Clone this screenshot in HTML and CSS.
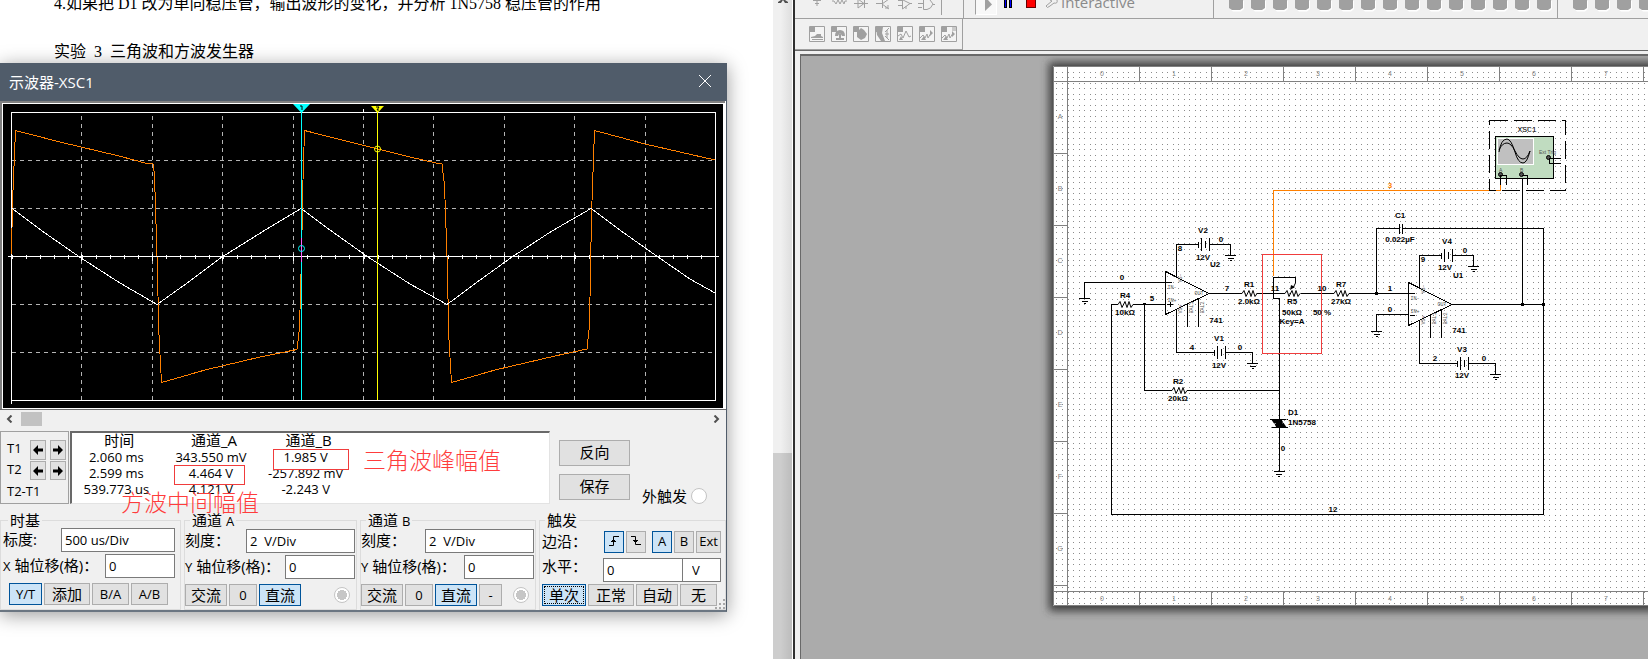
FILE: index.html
```html
<!DOCTYPE html>
<html lang="zh-CN">
<head>
<meta charset="utf-8">
<title>示波器-XSC1</title>
<link rel="stylesheet" href="styles.css">
</head>
<body>
<div class="desktop">
  <main class="document">
    <p class="doc-line">4.如果把 D1 改为单向稳压管，输出波形的变化，并分析 1N5758 稳压管的作用</p>
    <p class="doc-line">实验&nbsp; 3&nbsp; 三角波和方波发生器</p>

    <section class="scope" aria-label="示波器-XSC1">
      <header class="scope-title">
        <h1>示波器-XSC1</h1>
        <button class="close" aria-label="关闭"><svg width="14" height="14" viewBox="0 0 14 14"><path d="M1 1L13 13M13 1L1 13" stroke="#fff" fill="none"/></svg></button>
      </header>

      <svg class="display" viewBox="0 101 726 309">
        <rect x="0" y="101" width="726" height="309" fill="#fff"/>
        <path d="M1 409V102H725" stroke="#808080" stroke-width="2" fill="none"/>
        <path d="M0 409.500H726" stroke="#696969"/>
        <rect x="3" y="104" width="720" height="304" fill="#000"/>
        <g shape-rendering="crispEdges" fill="none">
          <g stroke="#b4b4b4" stroke-dasharray="4 4">
            <path d="M81.500 116V400M152.500 116V400M222.500 116V400M293.500 116V400M363.500 116V400M433.500 116V400M504.500 116V400M574.500 116V400M645.500 116V400"/>
            <path d="M12 160.500H715M12 208.500H715M12 304.500H715M12 352.500H715"/>
          </g>
          <path d="M11.500 112.500H715.500V400.500H11.500ZM11.500 400V404M363.500 109V112M8 256.500H719" stroke="#fff"/>
          <path d="M11.500 256.500H715" stroke="#fff" stroke-width="4" stroke-dasharray="1 13.080"/>
          <path d="M81.500 254V261M152.500 254V261M222.500 254V261M293.500 254V261M363.500 254V261M433.500 254V261M504.500 254V261M574.500 254V261M645.500 254V261" stroke="#fff"/>
          <path d="M11.500 254L12.500 202L15.500 130.500L60 142L119 156L145 163L153 164L154.500 175L157 256L159 335L161.500 382.500L205 370L260 357L297 349.500L299.500 328L301.500 256L303 180L304.500 130.500L350 142L410 157L436 163L442 164L444.500 185L447 256L449 340L451.500 382.500L495 370L555 356L587 349L589.500 325L591.500 215L594.500 130.500L645 144L680 152L715 160" stroke="#ff8000"/>
          <path d="M12 208.500L45 233L81 258L120 283L157 304.500L190 281L222 257L262 232L301 208.500L330 230L368 257L410 284L447 304.500L480 280L512 257L552 231L591 208.500L624 233L658 257L690 279L715 293" stroke="#fff"/>
          <path d="M301.500 108V400" stroke="#00ffff"/><path d="M301.500 238V262" stroke="#ff60ff"/>
          <path d="M377.500 108V400" stroke="#ffff00"/>
        </g>
        <path d="M293 104H310L301.500 113Z" fill="#00ffff"/><path d="M371 106H384L377.500 113Z" fill="#ffff00"/>
        <path d="M300 106H302V110M376 107H379L377 110H379" stroke="#000" fill="none"/>
        <circle cx="301.500" cy="248.500" r="3" stroke="#00ffff" fill="none"/>
        <circle cx="377.500" cy="149" r="3" stroke="#ffff00" fill="none"/>
      </svg>

      <div class="hscroll">
        <button aria-label="向左"><svg width="7" height="8" viewBox="0 0 7 8"><path d="M5.500 .5L2 4L5.500 7.500" stroke="#505050" stroke-width="2" fill="none"/></svg></button>
        <span class="thumb"></span>
        <button class="end" aria-label="向右"><svg width="7" height="8" viewBox="0 0 7 8"><path d="M1.500 .5L5 4L1.500 7.500" stroke="#505050" stroke-width="2" fill="none"/></svg></button>
      </div>

      <div class="readout">
        <div class="cursors">
          <span>T1</span><button aria-label="T1 左"><svg width="10" height="10" viewBox="0 0 10 10"><path d="M0 5L5 0V3.500H10V6.500H5V10Z"/></svg></button><button aria-label="T1 右"><svg width="10" height="10" viewBox="0 0 10 10"><path d="M10 5L5 0V3.500H0V6.500H5V10Z"/></svg></button>
          <span>T2</span><button aria-label="T2 左"><svg width="10" height="10" viewBox="0 0 10 10"><path d="M0 5L5 0V3.500H10V6.500H5V10Z"/></svg></button><button aria-label="T2 右"><svg width="10" height="10" viewBox="0 0 10 10"><path d="M10 5L5 0V3.500H0V6.500H5V10Z"/></svg></button>
          <span class="wide">T2-T1</span>
        </div>
        <div class="values">
          <table>
            <thead><tr><th>时间</th><th>通道_A</th><th>通道_B</th></tr></thead>
            <tbody>
              <tr><td>2.060 ms</td><td>343.550 mV</td><td>1.985 V</td></tr>
              <tr><td>2.599 ms</td><td>4.464 V</td><td>-257.892 mV</td></tr>
              <tr><td>539.773 us</td><td>4.121 V</td><td>-2.243 V</td></tr>
            </tbody>
          </table>
          <span class="mark mark-square"></span>
          <span class="mark mark-triangle"></span>
          <span class="note note-triangle">三角波峰幅值</span>
          <span class="note note-square">方波中间幅值</span>
        </div>
        <div class="actions"><button class="btn">反向</button><button class="btn">保存</button></div>
        <label class="ext">外触发<input type="radio" name="ext"></label>
      </div>

      <div class="groups">
        <fieldset class="group base">
          <legend>时基</legend>
          <div class="row"><label for="tb">标度:</label><input id="tb" class="long" value="500 us/Div"></div>
          <div class="row"><label for="xp"><small>X</small> 轴位移(格)：</label><input id="xp" value="0"></div>
          <div class="row keys"><button class="btn on w33">Y/T</button><button class="btn w46">添加</button><button class="btn w37">B/A</button><button class="btn w37">A/B</button></div>
        </fieldset>
        <fieldset class="group">
          <legend>通道 <small>A</small></legend>
          <div class="row"><label for="as">刻度：</label><input id="as" class="long" value="2  V/Div"></div>
          <div class="row"><label for="ap"><small>Y</small> 轴位移(格)：</label><input id="ap" value="0"></div>
          <div class="row keys"><button class="btn w42">交流</button><button class="btn w28">0</button><button class="btn on w42">直流</button><input type="radio" name="cha" aria-label="通道 A" class="dot" checked></div>
        </fieldset>
        <fieldset class="group">
          <legend>通道 <small>B</small></legend>
          <div class="row"><label for="bs">刻度：</label><input id="bs" class="long" value="2  V/Div"></div>
          <div class="row"><label for="bp"><small>Y</small> 轴位移(格)：</label><input id="bp" value="0"></div>
          <div class="row keys"><button class="btn w42">交流</button><button class="btn w28">0</button><button class="btn on w42">直流</button><button class="btn w23">-</button><input type="radio" name="chb" aria-label="通道 B" class="dot" checked></div>
        </fieldset>
        <fieldset class="group trigger">
          <legend>触发</legend>
          <div class="row edge"><span class="name">边沿：</span>
            <button class="btn on w20" aria-label="上升沿"><svg width="10" height="10" viewBox="0 0 10 10"><path d="M0 9.500H4.500V.5H10M2 5.500H7M3 4.500H6" stroke="#000" fill="none"/></svg></button>
            <button class="btn w20" aria-label="下降沿"><svg width="10" height="10" viewBox="0 0 10 10"><path d="M0 .5H4.500V8.500H10M2 4.500H7M3 5.500H6" stroke="#000" fill="none"/></svg></button>
            <button class="btn on w20 gap">A</button><button class="btn w20">B</button><button class="btn w25">Ext</button></div>
          <div class="row level"><label for="lv">水平：</label><input id="lv" value="0"><input class="unit" aria-label="单位" value="V"></div>
          <div class="row keys"><button class="btn on focus w44">单次</button><button class="btn w46">正常</button><button class="btn w42">自动</button><button class="btn w37">无</button></div>
        </fieldset>
      </div>
      <svg class="grip" width="11" height="11" viewBox="0 0 11 11"><path d="M8 0H10V2H8ZM8 4H10V6H8ZM4 4H6V6H4ZM8 8H10V10H8ZM4 8H6V10H4ZM0 8H2V10H0Z" fill="#a8a8a8"/></svg>
    </section>
  </main>

  <div class="vscroll"><svg width="12" height="6" viewBox="0 0 12 6"><path d="M1 2L4 0H8L11 2V3H8L6 0L4 3H1Z" fill="#505050"/></svg><span></span></div>

  <section class="editor" aria-label="电路图">
    <svg width="0" height="0" class="defs">
      <defs>
        <symbol id="blob" viewBox="0 0 22 18"><path d="M4 0H18V8L15 10.500H7L4 8Z" fill="#fff" transform="translate(1 1)"/><path d="M4 0H18V8L15 10H7L4 8Z" fill="#a0a0a0"/></symbol>
        <symbol id="tile" viewBox="0 0 16 16"><path d="M.5 .5H15.500V15.500H.5Z" fill="#f4f4f4" stroke="#a0a0a0"/><path d="M1 1H6V6H1Z" fill="#a0a0a0"/></symbol>
      </defs>
    </svg>
    <div class="bar bar-main">
      <div class="parts">
        <button aria-label="电源"><svg width="22" height="18"><path d="M7 .5H15M9 3.500H13M11 0V6" class="ic"/></svg></button>
        <button aria-label="基本"><svg width="22" height="18"><path d="M4 1H6L8 4L10 0L12 4L14 0L16 4L17 1H19" class="ic"/></svg></button>
        <button aria-label="二极管"><svg width="22" height="18"><path d="M4 3.500H18M8 0V8L14 3.500L8 -1M14.500 0V8" class="ic"/></svg></button>
        <button aria-label="晶体管"><svg width="22" height="18"><path d="M4 3.500H10M10.500 0V8M10 4L17 -1M10 4L17 9M13 8H16V5" class="ic"/></svg></button>
        <button aria-label="模拟"><svg width="22" height="18"><path d="M4 .5H8M4 5.500H8M8.500 0V9L16 3.500L9 0M16 3.500H18M12 6V9" class="ic"/></svg></button>
        <button aria-label="逻辑"><svg width="22" height="18"><path d="M2 3.500H8M2 7.500H6M7.500 0V9.500H11Q15 9 17 4L14 0M17 4.500H19" class="ic"/></svg></button>
        <i class="rule-end"></i>
      </div>
      <div class="run">
        <button class="play" aria-label="运行"><svg width="8" height="12"><path d="M0 0V11L7 4.500L3 0Z" fill="#a0a0a0"/></svg></button>
        <button aria-label="暂停"><svg width="9" height="8"><path d="M0 0H3V8H0ZM5 0H8V8H5Z"/><path d="M1 0H2V7H1ZM6 0H7V7H6Z" fill="#00f"/></svg></button>
        <button aria-label="停止"><svg width="10" height="8"><path d="M0 0H10V8H0Z" fill="#600"/><path d="M1 0H9V7H1Z" fill="red"/></svg></button>
        <svg width="14" height="9"><path d="M5 0L7 1L1 6Q2 9 5 6L9 3Q13 4 12 0" fill="none" stroke="#a0a0a0"/></svg>
        <span>Interactive</span>
      </div>
      <div class="meters">
        <svg><use href="#blob"/></svg><svg><use href="#blob"/></svg><svg><use href="#blob"/></svg><svg><use href="#blob"/></svg><svg><use href="#blob"/></svg><svg><use href="#blob"/></svg><svg><use href="#blob"/></svg><svg><use href="#blob"/></svg><svg><use href="#blob"/></svg><svg><use href="#blob"/></svg><svg><use href="#blob"/></svg><svg><use href="#blob"/></svg><svg><use href="#blob"/></svg><svg><use href="#blob"/></svg><svg><use href="#blob"/></svg>
      </div>
      <div class="meters more">
        <svg><use href="#blob"/></svg><svg><use href="#blob"/></svg><svg><use href="#blob"/></svg><svg><use href="#blob"/></svg>
      </div>
    </div>
    <div class="bar bar-view">
      <div class="tiles">
        <svg width="16" height="16"><use href="#tile"/><path d="M2 11L6 10L8 8H12V10L14 11V12H2ZM3 13H14V14H3Z" class="sf"/></svg>
        <svg width="16" height="16"><use href="#tile"/><path d="M4 10Q4 4 9 4Q14 4 14 10L11 10Q9 5 7 10ZM8 8H10V12H13V14H5V12H8Z" class="sf"/></svg>
        <svg width="16" height="16"><use href="#tile"/><path d="M8 2L11 4L14 8L12 12L8 14L4 11V6Z" class="sf"/></svg>
        <svg width="16" height="16"><use href="#tile"/><path d="M1 1H8L7 7L10 15H6L2 9Z" class="sf"/><path d="M10 6L14 2M10 8H14M10 10L14 14M12 4V12" class="ic"/></svg>
        <svg width="16" height="16"><use href="#tile"/><path d="M1 10L4 8L6 12L9 5L12 11L14 10" class="ic"/><path d="M2 14L4 10L6 14Z" class="sf"/></svg>
        <svg width="16" height="16"><use href="#tile"/><path d="M1 12L4 9L6 12L8 8L9 12L12 7" class="ic"/><path d="M11 4L14 7L11 10ZM2 14L5 10L7 14Z" class="sf"/></svg>
        <svg width="16" height="16"><use href="#tile"/><path d="M1 12L4 9L6 12L8 8L9 12L12 7M11 2H15M11 4H15" class="ic"/><path d="M11 5L14 8L11 11ZM2 14L5 10L7 14Z" class="sf"/></svg>
      </div>
    </div>

    <div class="workspace">
      <svg class="sheet" viewBox="801 56 847 603" preserveAspectRatio="xMinYMin slice">
        <defs>
          <pattern id="grid" x="1062" y="66" width="72" height="72" patternUnits="userSpaceOnUse">
            <path id="r" d="M0 .5h1m5 0h1m4 0h1m5 0h1m4 0h1m5 0h1m4 0h1m5 0h1m4 0h1m5 0h1m4 0h1m5 0h1m4 0h1" stroke="#8c8c8c"/>
            <use href="#r" y="6"/><use href="#r" y="11"/><use href="#r" y="17"/><use href="#r" y="22"/><use href="#r" y="28"/><use href="#r" y="33"/><use href="#r" y="39"/><use href="#r" y="44"/><use href="#r" y="50"/><use href="#r" y="55"/><use href="#r" y="61"/><use href="#r" y="66"/>
          </pattern>
          <filter id="soft" x="-10%" y="-10%" width="120%" height="120%"><feGaussianBlur stdDeviation="4"/></filter>
          <g id="res" class="w"><path d="M0 0H1L3 -3L5 3L8 -3L10 3L12 -3L14 3L16 0" shape-rendering="auto"/></g>
          <g id="gnd" class="w"><path d="M-5.500 0H5.500M-3 3H3M-1 5H1"/></g>
          <g id="bat" class="w"><path d="M0 -3V3M3 -7V6M7 -4V3M11 -7V6"/></g>
          <g id="amp">
            <path class="w" shape-rendering="auto" d="M0 -11V32L43.500 11Z"/>
            <path class="w" d="M0 0H6M1 22H6M11 -38V-6M11 26V70M22 21V44M33 16V44"/>
            <g class="pin"><text x="2" y="6">IN-</text><text x="2" y="19">IN+</text><text x="29" y="12">OUT</text><text transform="translate(16 0) rotate(-90)">VS-</text><text transform="translate(16 31) rotate(-90)">VS+</text><text transform="translate(27 31) rotate(-90)">BAL1</text><text transform="translate(38 31) rotate(-90)">BAL2</text></g>
          </g>
        </defs>
        <rect x="1049" y="62" width="640" height="549" fill="#3c3c3c" filter="url(#soft)"/>
        <rect x="1053" y="66" width="640" height="540" fill="#fff"/>
        <rect x="1054" y="67" width="640" height="538" fill="url(#grid)"/>
        <g class="rule">
          <path d="M1660 66.500H1053.500V605.500H1660M1053 81.500H1660M1067.500 66V605M1053 591.500H1660"/>
          <path d="M1139.500 67V81M1211.500 67V81M1283.500 67V81M1355.500 67V81M1427.500 67V81M1499.500 67V81M1571.500 67V81M1643.500 67V81M1139.500 592V605M1211.500 592V605M1283.500 592V605M1355.500 592V605M1427.500 592V605M1499.500 592V605M1571.500 592V605M1643.500 592V605"/>
          <path d="M1053 153.500H1067M1053 225.500H1067M1053 297.500H1067M1053 369.500H1067M1053 441.500H1067M1053 513.500H1067M1053 585.500H1067"/>
        </g>
        <g class="tick">
          <text x="1102" y="76">0</text><text x="1174" y="76">1</text><text x="1246" y="76">2</text><text x="1318" y="76">3</text><text x="1390" y="76">4</text><text x="1462" y="76">5</text><text x="1534" y="76">6</text><text x="1606" y="76">7</text>
          <text x="1102" y="601">0</text><text x="1174" y="601">1</text><text x="1246" y="601">2</text><text x="1318" y="601">3</text><text x="1390" y="601">4</text><text x="1462" y="601">5</text><text x="1534" y="601">6</text><text x="1606" y="601">7</text>
          <text x="1060" y="119">A</text><text x="1060" y="191">B</text><text x="1060" y="263">C</text><text x="1060" y="335">D</text><text x="1060" y="407">E</text><text x="1060" y="479">F</text><text x="1060" y="551">G</text>
        </g>

        <g class="w">
          <path d="M1165 282.500H1084.500V298M1117 304.500H1111.500V514.500H1543.500V228.500H1403M1133 304.500H1165M1144.500 304V390.500H1171M1187 390.500H1279"/>
          <path d="M1176 244.500H1198M1209 244.500H1230.500V255M1176 352.500H1214M1225 352.500H1252.500V363"/>
          <path d="M1209 293.500H1241M1257 293.500H1285M1301 293.500H1333M1349 293.500H1408M1295.500 283V277.500H1273.500V298.500H1279.500V471"/>
          <path d="M1376.500 293V228.500H1399M1399.500 224V234M1402.500 224V234M1408 314.500H1376.500V331M1452 304.500H1543M1522.500 175V304"/>
          <path d="M1419 255.500H1441M1452 255.500H1473.500V266M1419 363.500H1457M1468 363.500H1495.500V374"/>
        </g>
        <path d="M1273.500 276V190.500H1500.500V184" class="w orange"/>
        <g><use href="#res" x="1117" y="304.500"/><use href="#res" x="1171" y="390.500"/><use href="#res" x="1241" y="293.500"/><use href="#res" x="1284" y="293.500"/><use href="#res" x="1333" y="293.500"/></g>
        <g><use href="#gnd" x="1084.500" y="298.500"/><use href="#gnd" x="1230.500" y="255.500"/><use href="#gnd" x="1252.500" y="363.500"/><use href="#gnd" x="1279" y="471.500"/><use href="#gnd" x="1376.500" y="331.500"/><use href="#gnd" x="1473.500" y="266.500"/><use href="#gnd" x="1495.500" y="374.500"/></g>
        <g><use href="#bat" x="1198.500" y="244.500"/><use href="#bat" x="1214.500" y="352.500"/><use href="#bat" x="1441.500" y="255.500"/><use href="#bat" x="1457.500" y="363.500"/></g>
        <use href="#amp" x="1165.500" y="282.500"/><use href="#amp" x="1408.500" y="293.500"/>
        <path d="M1168 304.500H1173M1170.500 302V307" class="w"/>
        <path d="M1295.500 283L1293 288" stroke="#000"/>
        <path d="M1290 290L1291 285L1295 287ZM1271 419H1283L1277 428ZM1281 419L1287 428H1275ZM1143 303H1146V305H1143ZM1521 303H1524V306H1521ZM1542 303H1545V306H1542ZM1375 292H1378V295H1375Z"/>
        <path d="M1270 419.500H1288M1271 427.500H1288" class="w"/>
        <path d="M1282.500 423L1287 419.500M1271.500 427.500L1275.500 423" stroke="#fff"/>
        <rect x="1262.500" y="254.500" width="59" height="99" fill="none" stroke="#f03c3c"/>

        <rect x="1489.500" y="120.500" width="76" height="70" class="w" stroke-dasharray="18 6"/>
        <rect x="1495.500" y="136.500" width="58" height="42" fill="#c0dcc0" stroke="#000"/>
        <rect x="1497.500" y="138.500" width="36" height="26" fill="#c0c0c0" stroke="#fff"/>
        <path d="M1499 152Q1501 139 1507 139Q1511 139 1515 152Q1518 163 1523 163Q1527 163 1530 151M1499 150Q1502 143 1507 143Q1511 143 1515 151Q1519 159 1523 159Q1527 159 1530 151" stroke="#000" fill="none"/>
        <g fill="#555" stroke="#000"><circle cx="1500.500" cy="174.500" r="2"/><circle cx="1521.500" cy="174.500" r="2"/><circle cx="1548.500" cy="157.500" r="2"/></g>
        <path class="w" d="M1500.500 175V185M1500 175.500H1506.500V185M1522 175.500H1527.500V185M1549 158.500H1561M1549.500 158V163.500H1561"/>
        <g class="pin sans"><text x="1499" y="172">A</text><text x="1520" y="172">B</text><text x="1539" y="154">Ext Trig</text></g>
        <text x="1527" y="132" class="lab mono">XSC1</text>

        <g class="lab">
          <text x="1203" y="233">V2</text><text x="1221" y="242">0</text><text x="1180" y="251">8</text><text x="1203" y="260">12V</text><text x="1215" y="267">U2</text>
          <text x="1122" y="280">0</text><text x="1125" y="298">R4</text><text x="1152" y="301">5</text><text x="1125" y="315">10kΩ</text><text x="1216" y="323">741</text>
          <text x="1227" y="291">7</text><text x="1249" y="287">R1</text><text x="1249" y="304">2.0kΩ</text><text x="1275" y="291">11</text><text x="1292" y="304">R5</text><text x="1292" y="315">50kΩ</text><text x="1292" y="324">Key=A</text><text x="1322" y="291">10</text><text x="1322" y="315">50 %</text>
          <text x="1341" y="287">R7</text><text x="1341" y="304">27kΩ</text>
          <text x="1219" y="341">V1</text><text x="1192" y="350">4</text><text x="1240" y="350">0</text><text x="1219" y="368">12V</text>
          <text x="1178" y="384">R2</text><text x="1178" y="401">20kΩ</text>
          <text x="1293" y="415">D1</text><text x="1302" y="425">1N5758</text><text x="1283" y="451">0</text>
          <text x="1400" y="218">C1</text><text x="1400" y="242">0.022µF</text><text x="1447" y="244">V4</text><text x="1465" y="253">0</text><text x="1423" y="262">9</text><text x="1445" y="270">12V</text><text x="1458" y="278">U1</text>
          <text x="1390" y="291">1</text><text x="1390" y="312">0</text><text x="1459" y="333">741</text>
          <text x="1462" y="352">V3</text><text x="1435" y="361">2</text><text x="1484" y="361">0</text><text x="1462" y="378">12V</text>
          <text x="1333" y="512">12</text><text x="1390" y="188" class="net">3</text>
        </g>
      </svg>
    </div>
  </section>
</div>
</body>
</html>
```

FILE: styles.css
```css
* { box-sizing: border-box; }
body { margin: 0; font: 13px "Open Sans", "Noto Sans CJK SC", sans-serif; color: #000; }
button { padding: 0; border: 0; background: none; font: inherit; color: inherit; }
.desktop { display: grid; grid-template-columns: 773fr 19px 856fr; height: 100vh; overflow: hidden; background: #fff; }

/* Word processor page behind the instrument */
.document { position: relative; z-index: 1; min-width: 0; }
.doc-line { margin: 0; padding-left: 54px; font: 400 16px/48px "Liberation Serif", "Noto Sans CJK SC", serif; white-space: nowrap; }
.doc-line:first-child { line-height: 28px; height: 28px; margin-top: -10px; padding-top: 0; }
.doc-line + .doc-line { margin-top: 10px; }

/* Oscilloscope window */
.scope { position: absolute; top: 63px; left: 0; right: 46px; background: #f0f0f0; border-right: 1px solid #505c6a; border-bottom: 2px solid #6b7682; box-shadow: 0 3px 18px rgba(0, 0, 0, .4); }
.scope-title { display: flex; align-items: center; justify-content: space-between; height: 38px; padding: 0 14px 2px 9px; background: #505c6a; color: #fff; }
.scope-title h1 { margin: 0; font-size: 15px; font-weight: 400; }
.close { display: flex; }
.display { display: block; width: 100%; }
.hscroll { display: flex; align-items: center; height: 18px; padding: 0 6px; }
.hscroll button { display: flex; width: 15px; }
.hscroll .end { margin-left: auto; width: auto; }
.thumb { width: 21px; height: 14px; background: #c2c2c2; }

.readout { display: flex; height: 73px; margin-top: 3px; }
.cursors { display: grid; grid-template-columns: 19px 16px 16px; grid-template-rows: 20px 19px 22px; column-gap: 4px; row-gap: 1px; width: 69px; padding: 8px 0 0 6px; border: 1px solid #a0a0a0; }
.cursors span { line-height: 16px; white-space: nowrap; }
.cursors .wide { grid-column: 1 / -1; line-height: 20px; }
.cursors button { display: flex; align-items: center; justify-content: center; background: #e1e1e1; border: 1px solid #adadad; }
.values { position: relative; flex: 1; margin-left: 1px; background: #fff; border: 1px solid #e3e3e3; border-top: 2px solid #696969; border-left: 2px solid #696969; }
table { width: 284px; border-collapse: collapse; table-layout: fixed; text-align: center; }
th, td { padding: 0; height: 16px; line-height: 16px; font-weight: 400; white-space: nowrap; }
td { padding-right: 6px; }
th { height: 16px; font-size: 15px; line-height: 14px; padding-bottom: 2px; }
.mark { position: absolute; border: 1px solid #f03c3c; }
.mark-square { left: 102px; top: 32px; width: 71px; height: 20px; }
.mark-triangle { left: 201px; top: 16px; width: 76px; height: 21px; }
.note { position: absolute; font: 300 23px/28px "Noto Sans CJK SC", sans-serif; color: #ff3c3c; white-space: nowrap; }
.note-triangle { left: 291px; top: 12px; }
.note-square { left: 49px; top: 54px; }
.actions { display: flex; flex-direction: column; gap: 8px; width: 71px; margin: 9px 1px 0 9px; }
.btn { display: flex; align-items: center; justify-content: center; height: 22px; padding-bottom: 1px; background: #e1e1e1; border: 1px solid #adadad; white-space: nowrap; }
.actions .btn { height: 26px; padding-bottom: 3px; font-size: 15px; }
.ext { display: flex; align-items: center; gap: 4px; align-self: flex-end; margin: 0 19px 0 11px; font-size: 15px; line-height: 10px; }
input[type=radio] { appearance: none; width: 16px; height: 16px; margin: 0; border: 1px solid #c4c4c4; border-radius: 50%; background: #fff; }
input[type=radio]:checked { background: radial-gradient(circle, #c6c6c6 0 5px, #fff 5px); }

.groups { display: grid; grid-template-columns: 181fr 173fr 176fr 187fr; gap: 3px; margin-top: 8px; }
.group { min-width: 0; margin: 0; padding: 0 1px 2px 0; border: 1px solid #dcdcdc; }
.group legend { margin-left: 5px; padding: 0 2px; font-size: 15px; line-height: 16px; }
.base { padding-right: 5px; padding-left: 2px; }
.row { display: flex; align-items: center; justify-content: space-between; height: 24px; margin-bottom: 2px; }
.row label, .row .name { flex: 0 0 auto; font-size: 15px; line-height: 20px; padding-bottom: 2px; white-space: nowrap; }
small { font-size: 13px; }
.row input:not([type=radio]) { width: 70px; height: 24px; padding: 0 3px 1px; border: 1px solid #7a7a7a; background: #fff; font: inherit; white-space: pre; }
.row input.long:not([type=radio]) { width: 109px; }
.row.row #tb { width: 114px; }
.row label { margin-right: -20px; }
.row.keys { justify-content: flex-start; gap: 2px; height: 22px; margin: 5px 0 1px; }
.base .keys { padding-left: 6px; }
.keys .btn { font-size: 15px; }
.base .btn:not(.w46), .keys .w28, .keys .w23 { font-size: 13px; }
.dot { margin-left: auto !important; margin-right: 5px !important; }
.on { background: #cce4f7; border-color: #00549a; }
.focus { outline: 1px dotted #000; outline-offset: -3px; }
.w20 { width: 20px; } .w23 { width: 23px; } .w25 { width: 25px; } .w28 { width: 28px; } .w33 { width: 33px; }
.w37 { width: 37px; } .w42 { width: 42px; } .w44 { width: 44px; } .w46 { width: 46px; }
.trigger { padding-right: 4px; padding-left: 2px; }
.trigger legend { margin-left: 3px; }
.row.edge { height: 27px; margin-bottom: 3px; justify-content: flex-start; gap: 2px; }
.edge .name { margin-right: auto; }
.edge .gap { margin-left: 4px; }
.level { margin-bottom: 1px; justify-content: flex-start; }
.row.level label { margin-right: auto; padding-bottom: 8px; }
.row.level input:not([type=radio]) { width: 80px; }
.row.level input.unit:not([type=radio]) { width: 39px; margin-left: -1px; padding-left: 9px; }
.trigger .row.keys { margin-top: 2px; }
.grip { position: absolute; right: 0; bottom: 0; }

.vscroll { display: flex; flex-direction: column; align-items: center; background: linear-gradient(90deg, #f0f0f0 40%, #dedede); }
.vscroll span { width: 100%; flex: 1; margin-top: 447px; background: linear-gradient(90deg, #cdcdcd 40%, #bcbcbc); }

/* Schematic editor */
.editor { display: flex; flex-direction: column; min-width: 0; border-left: 2px solid #303030; background: #f0f0f0; margin-left: 1px; }
.defs { position: absolute; }
.bar { display: flex; overflow: hidden; border-bottom: 1px solid #a0a0a0; }
.bar-main { height: 19px; }
.parts, .run, .meters { display: flex; flex: none; align-items: flex-start; height: 18px; }
.parts { width: 169px; padding-left: 11px; border-right: 1px solid #a0a0a0; }
.parts button, .run button { display: flex; }
.rule-end { height: 15px; margin-left: 3px; border-left: 1px solid #a0a0a0; }
.run { gap: 13px; width: 250px; padding-left: 11px; border-right: 1px solid #a0a0a0; }
.play { width: 22px; height: 15px; margin-right: -6px; padding-left: 9px; border: 1px solid #fff; border-left-color: #a0a0a0; border-top: 0; background: #f8f8f8; }
.run > svg { margin-left: -4px; }
.run span { margin-left: -11px; font-size: 15px; line-height: 4px; color: #8a8a8a; }
.meters { width: 344px; padding-left: 11px; border-right: 1px solid #a0a0a0; }
.meters svg { flex: none; width: 22px; height: 18px; }
.more { border: 0; }
.ic { fill: none; stroke: #a0a0a0; }
.sf { fill: #a0a0a0; }
.bar-view { height: 32px; border-bottom-color: #696969; }
.tiles { display: flex; align-items: center; gap: 6px; width: 168px; height: 31px; padding: 0 0 0 14px; border-right: 1px solid #a0a0a0; border-bottom: 1px solid #a0a0a0; }
.workspace { flex: 1; min-height: 0; margin: 3px 0 0 5px; border-top: 2px solid #696969; border-left: 1px solid #696969; background: #ababab; }
.sheet { display: block; width: 100%; height: 100%; }
.w { fill: none; stroke: #000; shape-rendering: crispEdges; }
.orange { stroke: #ff8000; }
.rule { fill: none; stroke: #808080; }
.tick { font: 7px "Liberation Sans", sans-serif; fill: #808080; text-anchor: middle; }
.lab { font: bold 8px "Liberation Sans", sans-serif; fill: #000; text-anchor: middle; }
.mono { font: 8px "Liberation Mono", monospace; }
.pin { font: 5px "Liberation Mono", monospace; fill: #555; }
.sans { font-family: "Liberation Sans", sans-serif; }
.lab .net { fill: #ff8000; }
```
